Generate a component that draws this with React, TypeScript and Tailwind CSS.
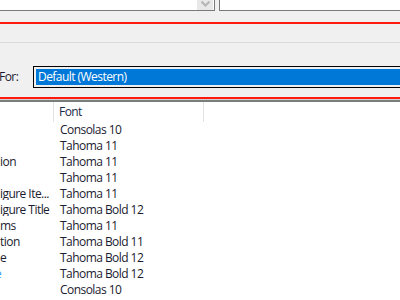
import React from "react";

const ROWS: { name: string; font: string; blue?: boolean }[] = [
  { name: "", font: "Consolas 10" },
  { name: "", font: "Tahoma 11" },
  { name: "ion", font: "Tahoma 11" },
  { name: "", font: "Tahoma 11" },
  { name: "igure Ite...", font: "Tahoma 11" },
  { name: "igure Title", font: "Tahoma Bold 12" },
  { name: "ms", font: "Tahoma 11" },
  { name: "tion", font: "Tahoma Bold 11" },
  { name: "e", font: "Tahoma Bold 12" },
  { name: "e", font: "Tahoma Bold 12", blue: true },
  { name: "", font: "Consolas 10" },
];

export default function App() {
  return (
    <div
      className="w-[400px] h-[300px] overflow-hidden bg-[#f0f0f0] flex flex-col text-[12px] text-[#1b1b2f]"
      style={{ fontFamily: '"Open Sans", "Noto Sans", sans-serif', letterSpacing: "-0.55px" }}
    >
      {/* top inputs */}
      <div className="h-[11px] flex shrink-0">
        <div className="w-[215px] bg-white border-r border-b border-[#7a7a7a] flex justify-end pr-[1px]">
          <div className="w-[16px] h-[10px] bg-[#e8e8e8] flex items-start justify-center">
            <svg width="9" height="6" viewBox="0 0 9 6" className="mt-[1px]">
              <path d="M0.5 0.5 L4.5 4.5 L8.5 0.5" fill="none" stroke="#b5b5b5" strokeWidth="2" />
            </svg>
          </div>
        </div>
        <div className="ml-[4px] flex-1 bg-white border-l border-b border-[#7a7a7a]" />
      </div>

      <div className="h-[11px] shrink-0" />
      <div className="h-[2px] bg-[#ff1a0f] shrink-0" />
      <div className="h-[18px] shrink-0" />
      <div className="h-[1px] bg-[#dadada] shrink-0" />
      <div className="h-[23px] shrink-0" />

      {/* encoding row */}
      <div className="flex h-[22px] shrink-0">
        <div className="w-[34px] flex items-center -ml-[1px] leading-none">For:</div>
        <div className="flex-1 border border-black p-[2px] pr-0 border-r-0">
          <div className="h-[16px] bg-[#0078d7] text-white flex items-center pl-[2px] leading-none">
            Default (Western)
          </div>
        </div>
      </div>

      <div className="h-[9px] shrink-0" />
      <div className="h-[2px] bg-[#ff1a0f] shrink-0" />
      <div className="h-[1px] bg-[#d0d0d0] shrink-0" />

      {/* list */}
      <div className="flex-1 bg-white border-t-2 border-[#7c7c7c]">
        <div className="flex h-[20px]">
          <div className="w-[54px] border-r border-[#e3e3e3]" />
          <div className="w-[150px] border-r border-[#e3e3e3] pl-[5px] flex items-center leading-none text-[#1c2a4a]">
            Font
          </div>
        </div>
        {ROWS.map((r, i) => (
          <div key={i} className="flex h-[16px] items-center leading-none">
            <div className="w-[54px] overflow-hidden whitespace-nowrap">
              {r.blue ? (
                <span className="-ml-[5px] inline-block text-[#3d9bff]">e</span>
              ) : (
                r.name
              )}
            </div>
            <div className="pl-[6px] whitespace-nowrap">{r.font}</div>
          </div>
        ))}
      </div>
    </div>
  );
}
